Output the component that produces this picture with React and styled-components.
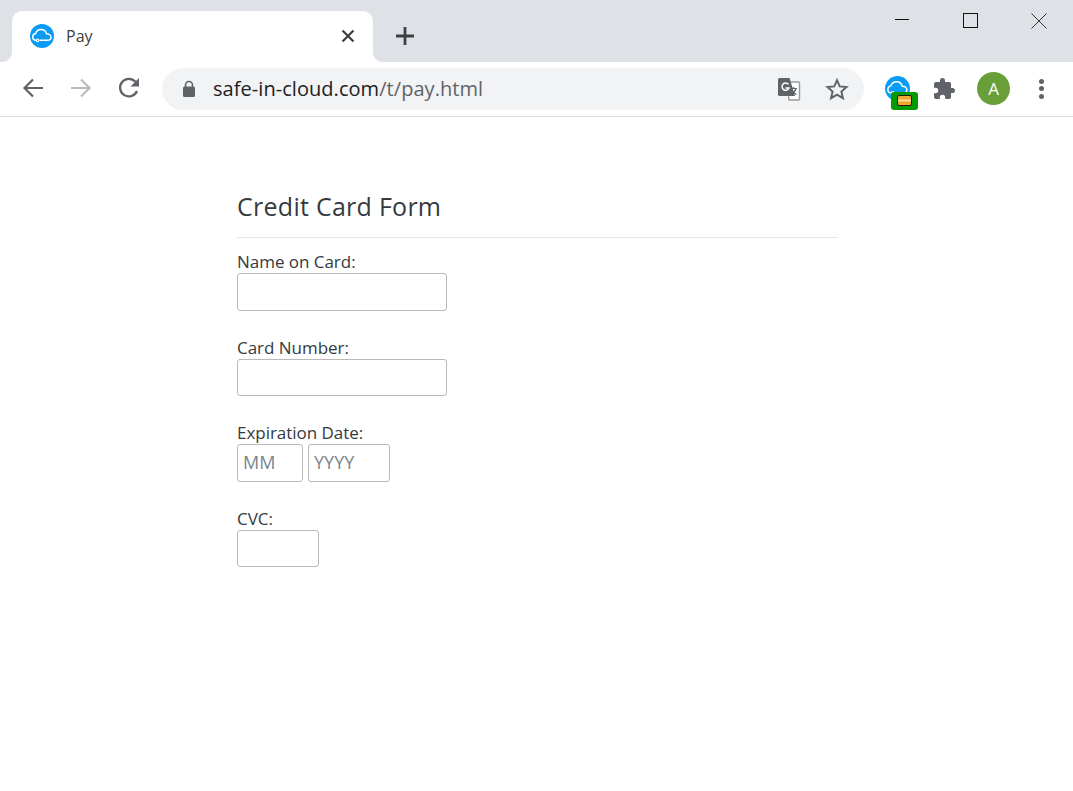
import React from "react";
import styled, { createGlobalStyle } from "styled-components";

const Global = createGlobalStyle`
  html, body { margin: 0; padding: 0; background: #fff; }
  body { font-family: "Open Sans", "Noto Sans", "Liberation Sans", sans-serif; }
  * { box-sizing: border-box; }
`;

const Page = styled.div`
  width: 1073px;
  height: 791px;
  overflow: hidden;
  background: #fff;
`;

const TabStrip = styled.div`
  height: 62px;
  background: #dee1e6;
  display: flex;
  align-items: flex-end;
  padding-left: 12px;
`;

const Tab = styled.div`
  position: relative;
  width: 361px;
  height: 51px;
  background: #fff;
  border-radius: 10px 10px 0 0;
  display: flex;
  align-items: center;
  padding: 0 18px 2px 18px;
  &::before, &::after {
    content: "";
    position: absolute;
    bottom: 0;
    width: 10px;
    height: 10px;
  }
  &::before {
    left: -10px;
    background: radial-gradient(circle at 0 0, #dee1e6 9.5px, #fff 10.5px);
  }
  &::after {
    right: -10px;
    background: radial-gradient(circle at 100% 0, #dee1e6 9.5px, #fff 10.5px);
  }
`;

const TabTitle = styled.span`
  flex: 1;
  margin-left: 12px;
  font-size: 16px;
  color: #3c4043;
`;

const NewTab = styled.div`
  margin: 0 0 15px 21px;
  width: 22px;
  height: 22px;
  display: flex;
`;

const WindowControls = styled.div`
  margin-left: auto;
  align-self: flex-start;
  display: flex;
`;

const WindowButton = styled.div`
  width: 69px;
  height: 41px;
  display: flex;
  align-items: center;
  justify-content: center;
`;

const Toolbar = styled.div`
  height: 55px;
  border-bottom: 1px solid #d9dadc;
  display: flex;
  align-items: center;
  padding: 0 0 1px 21px;
`;

const NavButton = styled.div`
  width: 24px;
  height: 24px;
  margin-right: ${({ $gap }) => $gap}px;
  margin-bottom: 2px;
  display: flex;
`;

const Omnibox = styled.div`
  width: 702px;
  height: 42px;
  margin-left: 21px;
  background: #f1f3f4;
  border-radius: 21px;
  display: flex;
  align-items: center;
  padding: 0 15px 0 19px;
`;

const Url = styled.div`
  flex: 1;
  margin-left: 16px;
  font-size: 20px;
  letter-spacing: 0.05px;
  color: #202124;
  white-space: nowrap;
`;

const UrlPath = styled.span`
  color: #5f6368;
`;

const OmniIcon = styled.div`
  width: 24px;
  height: 24px;
  display: flex;
  margin-left: ${({ $gap }) => $gap || 0}px;
`;

const ExtensionSlot = styled.div`
  position: relative;
  width: 26px;
  height: 26px;
  margin-left: 21px;
`;

const CardBadge = styled.div`
  position: absolute;
  left: 6px;
  top: 16px;
  width: 27px;
  height: 18px;
  border-radius: 3px;
  background: #049a04;
  display: flex;
  align-items: center;
  justify-content: center;
`;

const Puzzle = styled.div`
  width: 24px;
  height: 24px;
  margin-left: 21px;
  display: flex;
`;

const Avatar = styled.div`
  width: 33px;
  height: 33px;
  margin-left: 21px;
  border-radius: 50%;
  background: #689f38;
  color: #fff;
  font-size: 17px;
  display: flex;
  align-items: center;
  justify-content: center;
`;

const Menu = styled.div`
  width: 6px;
  height: 20px;
  margin-left: 29px;
  display: flex;
  flex-direction: column;
  justify-content: space-between;
`;

const MenuDot = styled.span`
  width: 5px;
  height: 5px;
  border-radius: 50%;
  background: #5f6368;
`;

const Content = styled.div`
  width: 601px;
  margin-left: 237px;
  padding-top: 71px;
  color: #343a40;
`;

const Title = styled.h1`
  margin: 0;
  font-size: 25px;
  font-weight: 400;
  line-height: 36px;
  letter-spacing: 0.27px;
  color: #343a40;
  padding-bottom: 13px;
  border-bottom: 1px solid #e6e6e6;
`;

const Form = styled.form`
  display: flex;
  flex-direction: column;
  gap: 25px;
  padding-top: 12px;
`;

const Field = styled.div`
  display: flex;
  flex-direction: column;
`;

const Label = styled.label`
  font-size: 17px;
  line-height: 24px;
  height: 23px;
  letter-spacing: -0.03px;
`;

const InputRow = styled.div`
  display: flex;
  gap: 5px;
`;

const Input = styled.input`
  width: ${({ $w }) => $w}px;
  height: ${({ $h }) => $h || 38}px;
  border: 1px solid #b9b9b9;
  border-radius: 3px;
  padding: 0 5px 2px;
  font-family: inherit;
  font-size: 18px;
  background: #fff;
  outline: none;
  &::placeholder { color: #7b848c; opacity: 1; }
`;

const CloudLogo = ({ size }) => (
  <svg width={size} height={size} viewBox="0 0 24 24">
    <circle cx="12" cy="12" r="12" fill="#0a9cf5" />
    <path
      d="M5.500 16.300c-1.700-.4-2.800-1.800-2.800-3.400 0-1.700 1.200-3.100 2.900-3.400C6.300 7.200 8.500 5.500 11 5.500c2.700 0 5 1.800 5.500 4.300 2.300 0 4.500 1.400 4.500 3.400 0 1.800-1.500 3.100-3.500 3.100H10"
      fill="none"
      stroke="#fff"
      strokeWidth="1.400"
      strokeLinecap="round"
    />
    <circle cx="7.500" cy="16.300" r="1.300" fill="none" stroke="#fff" strokeWidth="1.100" />
  </svg>
);

const App = () => {
  return (
    <Page>
      <Global />
      <TabStrip>
        <Tab>
          <CloudLogo size={24} />
          <TabTitle>Pay</TabTitle>
          <svg width="14" height="14" viewBox="0 0 14 14">
            <path d="M1.500 1.500l11 11M12.500 1.500l-11 11" stroke="#3c4043" strokeWidth="2.200" />
          </svg>
        </Tab>
        <NewTab>
          <svg width="22" height="22" viewBox="0 0 22 22">
            <path d="M11 2v18M2 11h18" stroke="#3c4043" strokeWidth="2.800" />
          </svg>
        </NewTab>
        <WindowControls>
          <WindowButton>
            <svg width="16" height="16" viewBox="0 0 16 16">
              <path d="M2 6.500h14" stroke="#111" strokeWidth="1" />
            </svg>
          </WindowButton>
          <WindowButton>
            <svg width="16" height="16" viewBox="0 0 16 16">
              <rect x="1.500" y="0.500" width="14" height="14" fill="none" stroke="#111" strokeWidth="1" />
            </svg>
          </WindowButton>
          <WindowButton>
            <svg width="16" height="16" viewBox="0 0 16 16">
              <path d="M.5.500l15 15M15.500.500l-15 15" stroke="#333" strokeWidth="1" />
            </svg>
          </WindowButton>
        </WindowControls>
      </TabStrip>

      <Toolbar>
        <NavButton $gap={24}>
          <svg width="24" height="24" viewBox="0 0 24 24">
            <path d="M22 12H3.500M12 3.500L3.500 12l8.500 8.500" fill="none" stroke="#5f6368" strokeWidth="2.200" />
          </svg>
        </NavButton>
        <NavButton $gap={24}>
          <svg width="24" height="24" viewBox="0 0 24 24">
            <path d="M2 12h18.500M12 3.500l8.500 8.500-8.500 8.500" fill="none" stroke="#b9bbbe" strokeWidth="2.200" />
          </svg>
        </NavButton>
        <NavButton $gap={0}>
          <svg width="24" height="24" viewBox="0 0 24 24">
            <path d="M20 15a8.800 8.800 0 1 1-1.500-9.200" fill="none" stroke="#5f6368" strokeWidth="2.300" />
            <path d="M22 2v8.500h-8.500z" fill="#5f6368" />
          </svg>
        </NavButton>
        <Omnibox>
          <svg width="16" height="18" viewBox="0 0 16 18">
            <path d="M4.500 7V5a3.500 3.500 0 0 1 7 0v2" fill="none" stroke="#5f6368" strokeWidth="1.600" />
            <rect x="2" y="6.500" width="12" height="10.500" rx="1.500" fill="#5f6368" />
          </svg>
          <Url>
            safe-in-cloud.com<UrlPath>/t/pay.html</UrlPath>
          </Url>
          <OmniIcon>
            <svg width="24" height="24" viewBox="0 0 24 24">
              <path d="M10 5h11.500a1 1 0 0 1 1 1v16a1 1 0 0 1-1 1H12z" fill="#fff" stroke="#9a9c9f" strokeWidth="1.400" />
              <path d="M2.500 1h10l5.500 18H2.500a1.500 1.500 0 0 1-1.500-1.500v-15A1.500 1.500 0 0 1 2.500 1z" fill="#5f6368" />
              <path d="M11.500 7.500A3.600 3.600 0 1 0 12 11H8.500" fill="none" stroke="#fff" strokeWidth="1.500" />
              <path d="M13 11.500h7M16.500 10v1.500M19 11.500c-.7 3-2.700 5-5 6.500M15 13c.8 2 2.300 3.500 4.500 4.500" fill="none" stroke="#5f6368" strokeWidth="1.200" />
            </svg>
          </OmniIcon>
          <OmniIcon $gap={24}>
            <svg width="24" height="24" viewBox="0 0 24 24">
              <path d="M12 3.200l2.700 6.200 6.800.6-5.100 4.500 1.500 6.600L12 17.600l-5.900 3.500 1.500-6.600L2.500 10l6.800-.6z" fill="none" stroke="#5f6368" strokeWidth="2" />
            </svg>
          </OmniIcon>
        </Omnibox>
        <ExtensionSlot>
          <CloudLogo size={25} />
          <CardBadge>
            <svg width="15" height="11" viewBox="0 0 15 11">
              <rect x="0.500" y="0.500" width="14" height="10" rx="1.500" fill="#f0a92e" stroke="#1c1c1c" strokeWidth="1" />
              <path d="M1 5.500h13" stroke="#ffe9b0" strokeWidth="1.600" />
            </svg>
          </CardBadge>
        </ExtensionSlot>
        <Puzzle>
          <svg width="24" height="24" viewBox="0 0 24 24">
            <path
              d="M20.500 11H19V7a2 2 0 0 0-2-2h-4V3.500a2.500 2.500 0 0 0-5 0V5H4a2 2 0 0 0-2 2v3.800h1.500a2.700 2.700 0 0 1 0 5.400H2V20a2 2 0 0 0 2 2h3.800v-1.500a2.700 2.700 0 0 1 5.400 0V22H17a2 2 0 0 0 2-2v-4h1.500a2.500 2.500 0 0 0 0-5z"
              fill="#5f6368"
            />
          </svg>
        </Puzzle>
        <Avatar>A</Avatar>
        <Menu>
          <MenuDot />
          <MenuDot />
          <MenuDot />
        </Menu>
      </Toolbar>

      <Content>
        <Title>Credit Card Form</Title>
        <Form>
          <Field>
            <Label>Name on Card:</Label>
            <Input $w={210} />
          </Field>
          <Field>
            <Label>Card Number:</Label>
            <Input $w={210} $h={37} />
          </Field>
          <Field>
            <Label>Expiration Date:</Label>
            <InputRow>
              <Input $w={66} placeholder="MM" />
              <Input $w={82} placeholder="YYYY" />
            </InputRow>
          </Field>
          <Field>
            <Label>CVC:</Label>
            <Input $w={82} $h={37} />
          </Field>
        </Form>
      </Content>
    </Page>
  );
};

export default App;
